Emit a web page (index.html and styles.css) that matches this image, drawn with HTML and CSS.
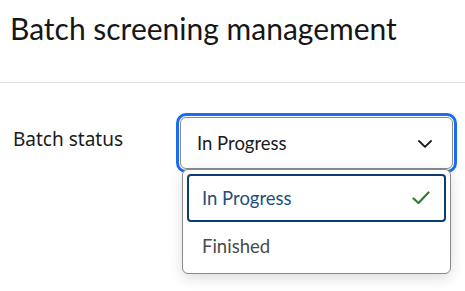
FILE: index.html
```html
<!DOCTYPE html>
<html>
<head>
<meta charset="utf-8">
<link rel="stylesheet" href="styles.css">
</head>
<body>
<header class="page-header">
  <h1 class="title">Batch screening management</h1>
</header>
<main class="content">
  <div class="field">
    <label class="field-label">Batch status</label>
    <div class="select-wrap">
      <div class="select">
        <span class="select-value">In Progress</span>
        <svg class="chevron" width="14" height="8" viewBox="0 0 14 8"><path d="M1 1 L7 6.8 L13 1" fill="none" stroke="#1b1b1b" stroke-width="1.8" stroke-linecap="round" stroke-linejoin="round"/></svg>
      </div>
      <ul class="menu">
        <li class="option selected">
          <span>In Progress</span>
          <svg class="check" width="18" height="14" viewBox="0 0 18 14"><path d="M1.5 7.5 L6.5 12 L16.5 1.5" fill="none" stroke="#2e7d32" stroke-width="2.2" stroke-linecap="round" stroke-linejoin="round"/></svg>
        </li>
        <li class="option">Finished</li>
      </ul>
    </div>
  </div>
</main>
</body>
</html>
```
FILE: styles.css
```css
* { box-sizing: border-box; }
html, body { min-height: 100vh; }
body {
  margin: 0;
  background: #fff;
  font-family: "Noto Sans", "Open Sans", sans-serif;
  color: #1b1b1b;
}
.page-header {
  height: 83px;
  border-bottom: 1px solid #e2e2e2;
  padding: 8px 0 0 10px;
}
.title {
  margin: 0;
  font-family: Lato, "Noto Sans", sans-serif;
  font-weight: 400;
  font-size: 30px;
  line-height: 40px;
  color: #161616;
}
.content {
  padding: 34px 0 0 13px;
}
.field {
  display: flex;
  align-items: flex-start;
}
.field-label {
  width: 167px;
  font-size: 19px;
  line-height: 24px;
  padding-top: 10px;
}
.select-wrap {
  position: relative;
  width: 273px;
}
.select {
  height: 52px;
  border: 1px solid #8a8a8a;
  border-radius: 6px;
  outline: 3px solid #1a6cf0;
  outline-offset: 1px;
  display: flex;
  align-items: center;
  justify-content: space-between;
  padding: 0 20px 0 16px;
  font-family: Lato, "Noto Sans", sans-serif;
  font-size: 18.5px;
}
.chevron { margin-top: 2px; }
.menu {
  position: absolute;
  top: 52px;
  left: 2px;
  width: 269px;
  margin: 0;
  padding: 4px;
  list-style: none;
  background: #fff;
  border: 1px solid #8a8a8a;
  border-radius: 6px;
  box-shadow: 0 4px 14px rgba(0,0,0,0.14);
}
.option {
  height: 47px;
  display: flex;
  align-items: center;
  justify-content: space-between;
  padding: 0 16px 0 15px;
  font-family: Lato, "Noto Sans", sans-serif;
  font-size: 18.5px;
  color: #4a4a4a;
}
.option.selected {
  height: 48px;
  border: 2px solid #0b3d6e;
  border-radius: 4px;
  padding: 0 14px 0 13px;
  color: #1f4f7f;
}
```
